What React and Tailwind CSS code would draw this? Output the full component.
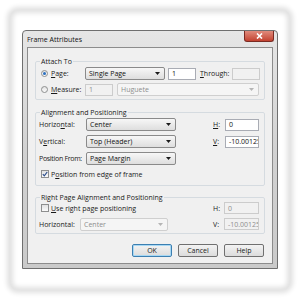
const U = ({ children }) => <span className="underline underline-offset-[1px]">{children}</span>;

const Arrow = ({ off }) => (
  <svg width="5" height="3" viewBox="0 0 5 3" className="shrink-0">
    <path d="M0 0h5L2.5 3z" fill={off ? "#b5b5b5" : "#1a1a1a"} />
  </svg>
);

const Select = ({ w, value, off }) => (
  <div
    className={
      "h-[13px] flex items-center justify-between pl-[3px] pr-[4px] rounded-[2px] border shrink-0 " +
      (off
        ? "border-[#cfcfcf] bg-[#f5f5f5] text-[#8e8e8e]"
        : "border-[#8a8a8a] bg-gradient-to-b from-[#f7f7f7] to-[#dedede] text-[#111]")
    }
    style={{ width: w }}
  >
    <span>{value}</span>
    <Arrow off={off} />
  </div>
);

const Box = ({ w, value, off }) => (
  <div
    className={
      "h-[12px] flex items-center px-[3px] border overflow-hidden shrink-0 " +
      (off ? "border-[#cccccc] bg-[#f1f1f1] text-[#8e8e8e]" : "border-[#a9acb4] bg-white text-[#111]")
    }
    style={{ width: w }}
  >
    <span>{value}</span>
  </div>
);

const Radio = ({ on }) => (
  <span className="w-[7px] h-[7px] rounded-full border border-[#8e8f8f] bg-gradient-to-b from-[#e4e4e4] to-[#fafafa] flex items-center justify-center shrink-0">
    {on && <span className="w-[3px] h-[3px] rounded-full bg-[#2a6fc0]" />}
  </span>
);

const Check = ({ on }) => (
  <span className="w-[8px] h-[8px] border border-[#8e8f8f] bg-gradient-to-b from-[#e2e2e2] to-[#fbfbfb] flex items-center justify-center shrink-0">
    {on && (
      <svg width="6" height="6" viewBox="0 0 6 6">
        <path d="M0.8 3.2l1.5 1.6L5.2 1" stroke="#2b4d8c" strokeWidth="1.2" fill="none" />
      </svg>
    )}
  </span>
);

const Btn = ({ children, main }) => (
  <div
    className={
      "w-[40px] h-[13px] rounded-[2px] border flex items-center justify-center bg-gradient-to-b from-[#f3f3f3] to-[#dcdcdc] " +
      (main ? "border-[#3c7fb1] shadow-[inset_0_0_0_1px_#a7d8f4]" : "border-[#707070]")
    }
  >
    {children}
  </div>
);

const Group = ({ title, className, children }) => (
  <fieldset className={"border border-[#d5dbe0] rounded-[2px] pl-[3px] pr-[2px] " + className}>
    <legend className="ml-[1px] px-[1px] h-[9px] leading-[9px]">{title}</legend>
    {children}
  </fieldset>
);

export default function App() {
  return (
    <div className="w-[300px] h-[300px] bg-white p-[10px] font-['Open_Sans',sans-serif] text-[7px] leading-[9px] text-[#1a1a1a] whitespace-nowrap">
      <div className="w-full h-full rounded-[8px] shadow-[0_0_5px_3px_rgba(0,0,0,0.12),inset_0_0_5px_3px_rgba(0,0,0,0.12)] pt-[20px] pl-[12px]">
        <div className="w-[256px] border border-[#6f6f6f] rounded-t-[4px] bg-gradient-to-b from-[#e6e6e6] via-[#d2d2d2] to-[#cacaca] flex flex-col">
          <div className="h-[16px] flex items-start justify-between pl-[4px] pr-[3px]">
            <span className="mt-[4px] text-[#111]">Frame Attributes</span>
            <div className="w-[30px] h-[11px] rounded-b-[3px] border border-t-0 border-[#7a2a22] bg-gradient-to-b from-[#e08a7c] to-[#c2402f] flex items-center justify-center">
              <svg width="7" height="6" viewBox="0 0 7 6">
                <path d="M1 0.5l5 5M6 0.5l-5 5" stroke="#fff" strokeWidth="1.6" />
              </svg>
            </div>
          </div>
          <div className="mx-[4px] mb-[4px] border border-[#8c8c8c] bg-[#f0f0f0] px-[7px] pt-[9px] pb-[6px] flex flex-col">
            <Group title="Attach To" className="pb-[3px]">
              <div className="mt-[1px] h-[13px] flex items-center">
                <div className="w-[46px] flex items-center gap-[3px] pl-[2px]">
                  <Radio on />
                  <span><U>P</U>age:</span>
                </div>
                <Select w={80} value="Single Page" />
                <div className="ml-[3px]"><Box w={28} value="1" /></div>
                <span className="ml-[4px] w-[32px]"><U>T</U>hrough:</span>
                <Box w={28} off />
              </div>
              <div className="mt-[3px] h-[13px] flex items-center">
                <div className="w-[46px] flex items-center gap-[3px] pl-[2px]">
                  <Radio />
                  <span><U>M</U>easure:</span>
                </div>
                <Box w={28} value="1" off />
                <div className="ml-[4px]"><Select w={142} value="Huguete" off /></div>
              </div>
            </Group>

            <Group title="Alignment and Positioning" className="mt-[8px] pb-[5px]">
              <div className="mt-[1px] flex flex-col gap-[4px]">
                <div className="h-[13px] flex items-center">
                  <span className="w-[47px]">Horizo<U>n</U>tal:</span>
                  <Select w={90} value="Center" />
                  <span className="ml-[37px] w-[12px]"><U>H</U>:</span>
                  <Box w={34} value="0" />
                </div>
                <div className="h-[13px] flex items-center">
                  <span className="w-[47px]">V<U>e</U>rtical:</span>
                  <Select w={90} value="Top (Header)" />
                  <span className="ml-[37px] w-[12px]"><U>V</U>:</span>
                  <Box w={34} value="-10.00125" />
                </div>
                <div className="h-[13px] flex items-center">
                  <span className="w-[47px] tracking-[-0.3px]">Position From:</span>
                  <Select w={90} value="Page Margin" />
                </div>
              </div>
              <div className="mt-[3px] h-[12px] flex items-center gap-[2px] pl-[2px]">
                <Check on />
                <span>P<U>o</U>sition from edge of frame</span>
              </div>
            </Group>

            <Group title="Right Page Alignment and Positioning" className="mt-[7px] pb-[3px]">
              <div className="h-[12px] flex items-center">
                <div className="w-[174px] flex items-center gap-[2px] pl-[2px]">
                  <Check />
                  <span><U>U</U>se right page positioning</span>
                </div>
                <span className="w-[11px]">H:</span>
                <Box w={35} value="0" off />
              </div>
              <div className="mt-[4px] h-[12px] flex items-center">
                <span className="w-[41px]">Horizontal:</span>
                <Select w={88} value="Center" off />
                <span className="ml-[45px] w-[11px]">V:</span>
                <Box w={35} value="-10.00125" off />
              </div>
            </Group>

            <div className="mt-[10px] flex justify-end gap-[6px] pr-[1px]">
              <Btn main>OK</Btn>
              <Btn>Cancel</Btn>
              <Btn>Help</Btn>
            </div>
          </div>
        </div>
      </div>
    </div>
  );
}
